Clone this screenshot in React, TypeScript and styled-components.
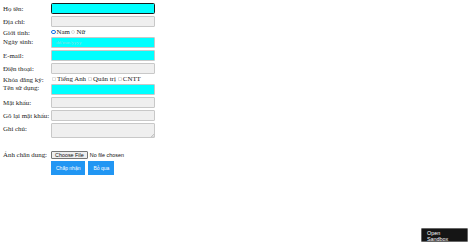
import React from 'react';
import styled, { createGlobalStyle } from 'styled-components';

const GlobalStyle = createGlobalStyle`
    html, body { margin: 0; padding: 0; background: #fff; }
    body { font-family: "Liberation Serif", "Times New Roman", serif; font-size: 6.9px; color: #222; }
`;

const Page = styled.div`
    width: 474px;
    height: 248px;
    position: relative;
    overflow: hidden;
`;

const Form = styled.form`
    display: flex;
    flex-direction: column;
    gap: 2px;
    padding: 3px 0 0 3px;
`;

const Row = styled.div<{ $h?: number }>`
    display: grid;
    grid-template-columns: 48px 104px;
    align-items: start;
    height: ${({ $h }) => ($h ? `${$h}px` : 'auto')};
`;

const Label = styled.label<{ $pad?: number }>`
    line-height: 7px;
    padding-top: ${({ $pad }) => ($pad ?? 1.5)}px;
    white-space: nowrap;
`;

const TextInput = styled.input<{ $hl?: boolean; $focus?: boolean }>`
    box-sizing: border-box;
    display: block;
    width: 104px;
    height: 11px;
    padding: 0 4px;
    margin: 0;
    font-family: "Liberation Serif", serif;
    font-size: 5px;
    background: ${({ $hl }) => ($hl ? '#00ffff' : '#efefef')};
    border: ${({ $focus }) => ($focus ? '1px solid #1a1a1a' : '0.5px solid #c8c8c8')};
    border-radius: ${({ $focus }) => ($focus ? '1.5px' : '1px')};
    outline: none;
    &::placeholder { color: #8fe0e0; }
`;

const NoteBox = styled.div`
    position: relative;
    width: 104px;
    height: 15px;
`;

const TextArea = styled.textarea`
    box-sizing: border-box;
    display: block;
    width: 104px;
    height: 15px;
    margin: 0;
    padding: 1px 3px;
    font-size: 5px;
    background: #efefef;
    border: 0.5px solid #c8c8c8;
    border-radius: 1px;
    resize: none;
`;

const Grip = styled.svg`
    position: absolute;
    right: 1px;
    bottom: 1px;
    width: 3px;
    height: 3px;
`;

const Options = styled.div`
    display: flex;
    align-items: center;
    height: 6px;
    line-height: 6px;
`;

const Opt = styled.label`
    display: flex;
    align-items: center;
    margin-right: 1px;
`;

const Radio = styled.span<{ $on?: boolean }>`
    display: inline-block;
    box-sizing: border-box;
    width: 4.5px;
    height: 4.5px;
    border-radius: 50%;
    border: ${({ $on }) => ($on ? '1.3px solid #1a73e8' : '0.5px solid #dcdcdc')};
    background: #fff;
    margin: 0 1px 0 0;
`;

const Check = styled.span`
    display: inline-block;
    box-sizing: border-box;
    width: 4px;
    height: 4px;
    border: 0.5px solid #e0e0e0;
    border-radius: 0.8px;
    margin: 0 1px 0 1px;
`;

const FileRow = styled.div`
    display: flex;
    align-items: center;
    gap: 2px;
    height: 9px;
    font-family: "Liberation Sans", Arial, sans-serif;
    font-size: 5.4px;
    color: #111;
`;

const FileButton = styled.span`
    box-sizing: border-box;
    height: 8px;
    padding: 0 3px;
    display: inline-flex;
    align-items: center;
    background: #efefef;
    border: 0.5px solid #767676;
    border-radius: 1px;
`;

const Buttons = styled.div`
    display: flex;
    gap: 3px;
`;

const Button = styled.button`
    height: 14px;
    padding: 0 5px;
    margin: 0;
    border: none;
    background: #2196f3;
    color: #fff;
    font-family: "Liberation Sans", Arial, sans-serif;
    font-size: 5px;
`;

const Sandbox = styled.div`
    position: absolute;
    left: 421px;
    top: 228px;
    width: 47px;
    height: 14px;
    box-sizing: border-box;
    padding: 1px 0 0 5px;
    background: #151515;
    border: 0.5px solid #666;
    border-radius: 1px;
    color: #fff;
    font-family: "Liberation Sans", Arial, sans-serif;
    font-size: 5.4px;
    line-height: 6px;
`;

export default function App() {
    return (
        <Page>
            <GlobalStyle />
            <Form onSubmit={(e) => e.preventDefault()}>
                <Row>
                    <Label $pad={2}>Họ tên:</Label>
                    <TextInput $hl $focus />
                </Row>
                <Row>
                    <Label $pad={2}>Địa chỉ:</Label>
                    <TextInput />
                </Row>
                <Row $h={6}>
                    <Label $pad={0}>Giới tính:</Label>
                    <Options>
                        <Opt><Radio $on />Nam</Opt>
                        <Opt><Radio />Nữ</Opt>
                    </Options>
                </Row>
                <Row>
                    <Label $pad={0.5}>Ngày sinh:</Label>
                    <TextInput $hl placeholder="dd/mm/yyyy" />
                </Row>
                <Row>
                    <Label $pad={2}>E-mail:</Label>
                    <TextInput $hl />
                </Row>
                <Row>
                    <Label $pad={2}>Điện thoại:</Label>
                    <TextInput />
                </Row>
                <Row $h={6}>
                    <Label $pad={0}>Khóa đăng ký:</Label>
                    <Options>
                        <Opt><Check />Tiếng Anh</Opt>
                        <Opt><Check />Quản trị</Opt>
                        <Opt><Check />CNTT</Opt>
                    </Options>
                </Row>
                <Row>
                    <Label $pad={0}>Tên sử dụng:</Label>
                    <TextInput $hl />
                </Row>
                <Row>
                    <Label $pad={2}>Mật khẩu:</Label>
                    <TextInput />
                </Row>
                <Row>
                    <Label $pad={1.5}>Gõ lại mật khẩu:</Label>
                    <TextInput />
                </Row>
                <Row>
                    <Label $pad={2}>Ghi chú:</Label>
                    <NoteBox>
                        <TextArea />
                        <Grip viewBox="0 0 3 3">
                            <path d="M3 0L0 3M3 1.5L1.5 3" stroke="#9a9a9a" strokeWidth="0.5" />
                        </Grip>
                    </NoteBox>
                </Row>
                <Row $h={8} />
                <Row>
                    <Label $pad={1}>Ảnh chân dung:</Label>
                    <FileRow>
                        <FileButton>Choose File</FileButton>
                        No file chosen
                    </FileRow>
                </Row>
                <Row>
                    <span />
                    <Buttons>
                        <Button type="submit">Chấp nhận</Button>
                        <Button type="reset">Bỏ qua</Button>
                    </Buttons>
                </Row>
            </Form>
            <Sandbox>Open<br />Sandbox</Sandbox>
        </Page>
    );
}
